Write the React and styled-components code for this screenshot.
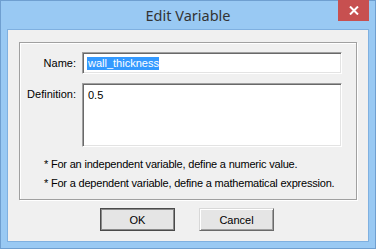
import React from 'react';
import styled, { createGlobalStyle } from 'styled-components';

const UI_FONT = '"Liberation Sans", Arial, sans-serif';

const GlobalStyle = createGlobalStyle`
  html, body {
    margin: 0;
    padding: 0;
    background: #ffffff;
  }
  * {
    box-sizing: border-box;
  }
`;

const Window = styled.div`
  position: relative;
  width: 376px;
  height: 249px;
  display: flex;
  flex-direction: column;
  background: #99c9f3;
  border: 1px solid #6f9fd0;
  font-family: ${UI_FONT};
  font-size: 11px;
  color: #000;
`;

const TitleBar = styled.div`
  height: 28px;
  flex: none;
  display: flex;
  align-items: center;
  justify-content: center;
  padding-bottom: 1px;
`;

const Title = styled.span`
  font-family: "Noto Sans", "Open Sans", sans-serif;
  font-size: 14.5px;
  color: #333;
`;

const CloseButton = styled.div`
  position: absolute;
  top: -1px;
  right: 6px;
  width: 31px;
  height: 21px;
  background: #c75050;
  display: flex;
  align-items: center;
  justify-content: center;
`;

const Client = styled.div`
  flex: 1;
  margin: 0 6px 6px;
  border: 1px solid #7fb0e0;
  background: #f0f0f0;
  display: flex;
  flex-direction: column;
  align-items: center;
  padding: 12px 11px 0;
`;

const GroupBox = styled.div`
  width: 100%;
  height: 158px;
  border: 1px solid #a0a0a0;
  box-shadow: inset 1px 1px 0 #ffffff, 1px 1px 0 #ffffff;
  padding: 9px 0 0 0;
`;

const FieldGrid = styled.div`
  display: grid;
  grid-template-columns: 56px 260px;
  column-gap: 6px;
  row-gap: 9px;
`;

const Label = styled.div`
  text-align: right;
  padding-top: ${(p) => (p.$top ? '5px' : '0')};
  align-self: ${(p) => (p.$top ? 'start' : 'center')};
  color: #000;
`;

const Field = styled.div`
  height: ${(p) => p.$height}px;
  background: #fff;
  border-top: 1px solid #a0a0a0;
  border-left: 1px solid #a0a0a0;
  border-right: 1px solid #ffffff;
  border-bottom: 1px solid #ffffff;
  box-shadow: inset 1px 1px 0 #696969, inset -1px -1px 0 #e3e3e3;
  padding: ${(p) => (p.$multi ? '5px 5px' : '3px 4px')};
  display: flex;
  align-items: ${(p) => (p.$multi ? 'flex-start' : 'center')};
`;

const Selected = styled.span`
  background: #3399ff;
  color: #fff;
  padding: 0 0 0 1px;
  line-height: 13px;
`;

const Notes = styled.div`
  padding: 11px 0 0 24px;
  display: flex;
  flex-direction: column;
  gap: 6px;
`;

const Note = styled.div`
  line-height: 13px;
  letter-spacing: -0.2px;
`;

const ButtonRow = styled.div`
  display: flex;
  gap: 24px;
  margin-top: 8px;
  padding-right: 2px;
`;

const Button = styled.div`
  width: 75px;
  height: 23px;
  display: flex;
  align-items: center;
  justify-content: center;
  background: #e5e5e5;
  border: 1px solid ${(p) => (p.$default ? '#4a4a4a' : '#d8d8d8')};
  border-right-color: ${(p) => (p.$default ? '#4a4a4a' : '#6a6a6a')};
  border-bottom-color: ${(p) => (p.$default ? '#4a4a4a' : '#6a6a6a')};
  box-shadow: ${(p) =>
    p.$default
      ? 'inset 1px 1px 0 #8a8a8a, inset -1px -1px 0 #8a8a8a'
      : 'inset 1px 1px 0 #ffffff, inset -1px -1px 0 #a0a0a0'};
  font-size: 11px;
  color: #000;
`;

const CloseIcon = () => (
  <svg width="10" height="9" viewBox="0 0 10 9">
    <path d="M1 0.5 L9 8.5 M9 0.5 L1 8.5" stroke="#fff" strokeWidth="2" />
  </svg>
);

export default function App() {
  return (
    <>
      <GlobalStyle />
      <Window>
        <TitleBar>
          <Title>Edit Variable</Title>
        </TitleBar>
        <CloseButton>
          <CloseIcon />
        </CloseButton>
        <Client>
          <GroupBox>
            <FieldGrid>
              <Label>Name:</Label>
              <Field $height={22}>
                <Selected>wall_thickness</Selected>
              </Field>
              <Label $top>Definition:</Label>
              <Field $height={64} $multi>
                0.5
              </Field>
            </FieldGrid>
            <Notes>
              <Note>* For an independent variable, define a numeric value.</Note>
              <Note>* For a dependent variable, define a mathematical expression.</Note>
            </Notes>
          </GroupBox>
          <ButtonRow>
            <Button $default>OK</Button>
            <Button>Cancel</Button>
          </ButtonRow>
        </Client>
      </Window>
    </>
  );
}
